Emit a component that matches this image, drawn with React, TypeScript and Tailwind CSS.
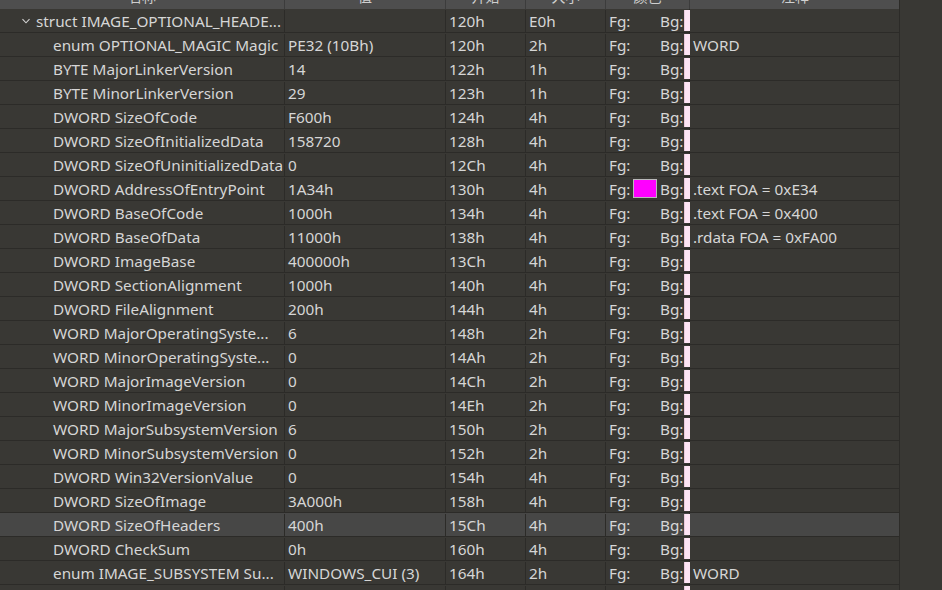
import React from 'react';

type Row = {
  name: string;
  value: string;
  start: string;
  size: string;
  fg?: string;
  comment?: string;
  depth: number;
  expanded?: boolean;
  selected?: boolean;
};

const rows: Row[] = [
  { name: 'struct IMAGE_OPTIONAL_HEADE...', value: '', start: '120h', size: 'E0h', depth: 0, expanded: true },
  { name: 'enum OPTIONAL_MAGIC Magic', value: 'PE32 (10Bh)', start: '120h', size: '2h', comment: 'WORD', depth: 1 },
  { name: 'BYTE MajorLinkerVersion', value: '14', start: '122h', size: '1h', depth: 1 },
  { name: 'BYTE MinorLinkerVersion', value: '29', start: '123h', size: '1h', depth: 1 },
  { name: 'DWORD SizeOfCode', value: 'F600h', start: '124h', size: '4h', depth: 1 },
  { name: 'DWORD SizeOfInitializedData', value: '158720', start: '128h', size: '4h', depth: 1 },
  { name: 'DWORD SizeOfUninitializedData', value: '0', start: '12Ch', size: '4h', depth: 1 },
  { name: 'DWORD AddressOfEntryPoint', value: '1A34h', start: '130h', size: '4h', fg: '#ff00ff', comment: '.text FOA = 0xE34', depth: 1 },
  { name: 'DWORD BaseOfCode', value: '1000h', start: '134h', size: '4h', comment: '.text FOA = 0x400', depth: 1 },
  { name: 'DWORD BaseOfData', value: '11000h', start: '138h', size: '4h', comment: '.rdata FOA = 0xFA00', depth: 1 },
  { name: 'DWORD ImageBase', value: '400000h', start: '13Ch', size: '4h', depth: 1 },
  { name: 'DWORD SectionAlignment', value: '1000h', start: '140h', size: '4h', depth: 1 },
  { name: 'DWORD FileAlignment', value: '200h', start: '144h', size: '4h', depth: 1 },
  { name: 'WORD MajorOperatingSyste...', value: '6', start: '148h', size: '2h', depth: 1 },
  { name: 'WORD MinorOperatingSyste...', value: '0', start: '14Ah', size: '2h', depth: 1 },
  { name: 'WORD MajorImageVersion', value: '0', start: '14Ch', size: '2h', depth: 1 },
  { name: 'WORD MinorImageVersion', value: '0', start: '14Eh', size: '2h', depth: 1 },
  { name: 'WORD MajorSubsystemVersion', value: '6', start: '150h', size: '2h', depth: 1 },
  { name: 'WORD MinorSubsystemVersion', value: '0', start: '152h', size: '2h', depth: 1 },
  { name: 'DWORD Win32VersionValue', value: '0', start: '154h', size: '4h', depth: 1 },
  { name: 'DWORD SizeOfImage', value: '3A000h', start: '158h', size: '4h', depth: 1 },
  { name: 'DWORD SizeOfHeaders', value: '400h', start: '15Ch', size: '4h', depth: 1, selected: true },
  { name: 'DWORD CheckSum', value: '0h', start: '160h', size: '4h', depth: 1 },
  { name: 'enum IMAGE_SUBSYSTEM Su...', value: 'WINDOWS_CUI (3)', start: '164h', size: '2h', comment: 'WORD', depth: 1 },
  { name: 'WORD DllCharacteristics', value: '8140h', start: '166h', size: '2h', depth: 1 },
];

const headers = [
  { label: '名称', w: 'w-[285px]' },
  { label: '值', w: 'w-[161px]' },
  { label: '开始', w: 'w-[80px]' },
  { label: '大小', w: 'w-[80px]' },
  { label: '颜色', w: 'w-[84px]' },
  { label: '注释', w: 'w-[210px]' },
];

const Chevron = () => (
  <svg width="10" height="10" viewBox="0 0 10 10" className="shrink-0">
    <path d="M1.5 3.2 L5 6.8 L8.5 3.2" fill="none" stroke="#d4d4d4" strokeWidth="1.1" />
  </svg>
);

export default function App() {
  return (
    <div
      className="w-[942px] h-[590px] overflow-hidden bg-[#393834] text-[#d6d6d6] text-[15.3px]"
      style={{ fontFamily: '"Noto Sans", "Noto Sans CJK SC", sans-serif' }}
    >
      <div className="flex">
        <div className="flex flex-col w-[900px] border-r border-[#2c2b28] shrink-0">
          {/* Header: list is scrolled, only the bottom edge of the titles shows */}
          <div className="flex h-[9px] overflow-hidden bg-[#4e4e4e]">
            {headers.map(h => (
              <div key={h.label} className={`${h.w} shrink-0 border-r border-[#3c3c3c] last:border-r-0 flex justify-center`}>
                <span className="-mt-[12px] leading-[18px] text-[14px] text-[#cfcfcf]">{h.label}</span>
              </div>
            ))}
          </div>

          {rows.map((r, i) => (
            <div
              key={i}
              className={`flex h-[24px] border-b border-[#2c2b28] leading-[23px] pt-[1px] whitespace-nowrap ${r.selected ? 'bg-[#474746]' : ''}`}
            >
              <div className={`w-[285px] shrink-0 border-r border-[#2c2b28] flex items-center overflow-hidden ${r.depth === 0 ? 'pl-[21px]' : 'pl-[53px]'}`}>
                {r.depth === 0 && (
                  <span className="mr-[5px] flex items-center">
                    <Chevron />
                  </span>
                )}
                <span>{r.name}</span>
              </div>
              <div className="w-[161px] shrink-0 border-r border-[#2c2b28] pl-[3px] overflow-hidden">{r.value}</div>
              <div className="w-[80px] shrink-0 border-r border-[#2c2b28] pl-[3px]">{r.start}</div>
              <div className="w-[80px] shrink-0 border-r border-[#2c2b28] pl-[3px]">{r.size}</div>
              <div className="w-[84px] shrink-0 border-r border-[#2c2b28] flex items-stretch -mt-[1px]">
                <span className="pl-[3px] pt-[1px] w-[27px] shrink-0">Fg:</span>
                <span className="w-[24px] shrink-0 flex items-center">
                  {r.fg && <span className="block w-[24px] h-[19px] border border-[#b9b9b9] bg-[#ff00ff]" />}
                </span>
                <span className="pl-[3px] pt-[1px] w-[27px] shrink-0">Bg:</span>
                <span className="flex items-center">
                  <span className="block w-[6px] h-[21px] bg-[#fde4f4] border-l border-[#e8c9dc]" />
                </span>
              </div>
              <div className="w-[209px] shrink-0 pl-[3px]">{r.comment ?? ''}</div>
            </div>
          ))}
        </div>
        <div className="flex-1" />
      </div>
    </div>
  );
}
